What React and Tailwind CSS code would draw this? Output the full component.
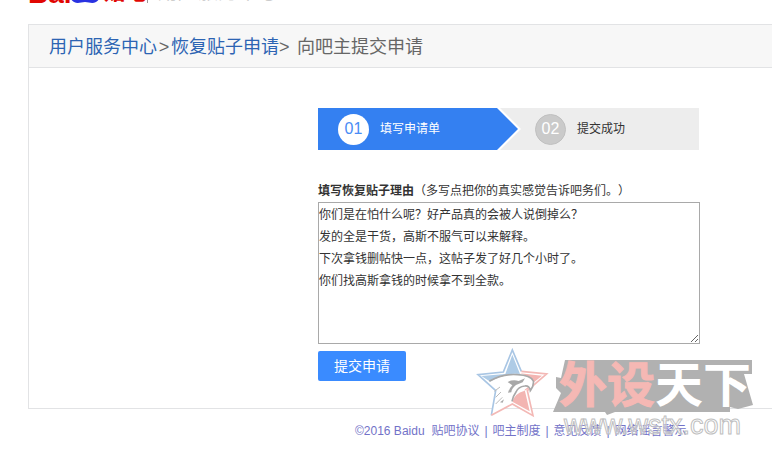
function Paw() {
  return (
    <svg viewBox="0 0 30 30" className="h-[30px] w-[30px]" fill="#2932e1" aria-hidden="true">
      <ellipse cx="4" cy="12" rx="3" ry="4" />
      <ellipse cx="10" cy="5" rx="3" ry="4" />
      <ellipse cx="19" cy="5" rx="3" ry="4" />
      <ellipse cx="26" cy="12" rx="3" ry="4" />
      <path d="M15 10c-6 0-8 5-12 9-3 4-3 8 1 10 4 2 7 0 11 0s7 2 11 0c4-2 4-6 1-10-4-4-6-9-12-9z" />
    </svg>
  );
}

function Header() {
  return (
    <header className="flex h-6 items-start overflow-hidden pl-[28px]">
      <div className="-mt-[27px] flex h-[30px] shrink-0 items-end whitespace-nowrap">
        <span className="w-[42px] text-[28px] leading-[18px] font-bold text-[#e10602]">Bai</span>
        <Paw />
        <span className="ml-[4px] text-[21px] leading-[22px] font-black text-[#e10602]">贴吧</span>
        <span className="mr-[10px] ml-px h-[29px] w-px bg-[#999]" />
        <span className="text-[20px] leading-[22px] text-[#aaa]">用户服务中心</span>
      </div>
    </header>
  );
}

function Step({ number, label, active }) {
  return (
    <li className="flex items-center gap-[11px]">
      <span
        className={
          active
            ? "flex size-[31px] items-center justify-center rounded-full bg-white text-base text-[#4a8cf5]"
            : "flex size-[31px] items-center justify-center rounded-full border border-[#c0c0c0] bg-[#cacaca] text-base text-white"
        }
      >
        {number}
      </span>
      <span className={active ? "text-white" : "text-[#333]"}>{label}</span>
    </li>
  );
}

function Steps() {
  return (
    <ol className="flex h-[42px] w-[381px] bg-[#ededed]">
      <div className="flex w-[179px] bg-[#3480f1] pl-5">
        <Step number="01" label="填写申请单" active />
      </div>
      <svg viewBox="0 0 24 42" className="h-[42px] w-6" aria-hidden="true">
        <path d="M0 0h3l21 21L3 42H0z" fill="#fff" />
        <path d="M0 0l21 21L0 42z" fill="#3480f1" />
      </svg>
      <div className="flex pl-[14px]">
        <Step number="02" label="提交成功" />
      </div>
    </ol>
  );
}

function Star() {
  return (
    <svg viewBox="45 48 225 219" className="h-[73px] w-[75px]" aria-hidden="true">
      <path d="M157 60L184 124L260 132L202 182L219 257L157 222L95 257L108 182L54 134L130 126z" fill="#fff" />
      <path d="M94 256L107 182L54 134L130 126L157 60L184 124" fill="none" stroke="#a9c6e4" strokeWidth="5" />
      <path d="M184 124L260 132L202 182L219 257L157 222L94 256" fill="none" stroke="#f3b8b5" strokeWidth="5" />
      <path d="M157 74L180 132Q148 128 128 140L91 155L64 138L136 132z" fill="#aecbe6" />
      <path d="M180 130L246 137L194 179L209 244L157 215Q165 190 192 183Q218 173 219 150Q208 138 180 130z" fill="#f3b5b2" />
      <path
        d="M90 155Q123 134 166 135Q210 138 219 152Q222 168 209 182Q209 169 194 168Q177 170 169 185Q158 198 157 215L101 245L114 184z"
        fill="#fff"
      />
      <path
        d="M88 154Q128 130 173 134Q212 136 220 153Q222 168 211 182Q209 166 194 168Q175 170 168 186Q158 200 156 214"
        fill="none"
        stroke="#a8a8a8"
        strokeWidth="5"
      />
      <path d="M143 156Q158 148 176 153L195 145L188 157L168 165Q155 175 154 187L144 188Q148 174 157 166z" fill="#a8a8a8" />
      <path d="M103 184l17-13M107 202l16-16M107 222l20-20" fill="none" stroke="#bbb" strokeWidth="3" />
      <path d="M120 217l12-9-4 10z" fill="#a8a8a8" />
    </svg>
  );
}

function Watermark() {
  return (
    <div className="pointer-events-none absolute top-[346px] left-[475px] flex select-none" aria-hidden="true">
      <Star />
      <div className="relative h-[96px] w-[210px]">
        <svg viewBox="0 0 210 96" className="absolute inset-0 h-full w-full">
          <path
            d="M15 14H202V28H194L203 59L188 63L180 61V66H65L57 69L55 66H3L11 47L6 42V31L11 32z"
            fill="#b1b1b1"
          />
        </svg>
        <div className="absolute top-[16px] left-[9px] flex text-[48px] leading-[48px] font-bold whitespace-nowrap">
          <span className="text-[#f5b8b4] [-webkit-text-stroke:1px_#f5b8b4]">外设</span>
          <span className="text-white">天下</span>
        </div>
        <div className="absolute top-[64px] left-[14px] text-[27px] leading-[30px] whitespace-nowrap text-white/40 [-webkit-text-stroke:1px_#c0c0c0]">
          www.wstx.com
        </div>
      </div>
    </div>
  );
}

const message = `你们是在怕什么呢？好产品真的会被人说倒掉么？
发的全是干货，高斯不服气可以来解释。
下次拿钱删帖快一点，这帖子发了好几个小时了。
你们找高斯拿钱的时候拿不到全款。`;

const footerLinks = ["贴吧协议", "吧主制度", "意见反馈", "网络谣言警示"];

export default function App() {
  return (
    <div className="relative min-h-screen overflow-hidden bg-white font-['Liberation_Sans','Noto_Sans_CJK_SC',sans-serif] text-xs text-[#333] [text-spacing-trim:space-all]">
      <Header />
      <main className="ml-[28px] border-y border-l border-[#e2e3e5]">
        <nav className="flex h-[43px] items-center border-b border-[#e2e3e5] bg-[#f7f7f7] pt-[2px] pl-5 text-lg whitespace-nowrap text-[#666]">
          <a href="#service" className="text-[#2d64b3]">用户服务中心</a>
          <span className="w-[14px] text-center">&gt;</span>
          <a href="#restore" className="text-[#2d64b3]">恢复贴子申请</a>
          <span className="w-[18px]">&gt;</span>
          <span>向吧主提交申请</span>
        </nav>
        <form className="pt-10 pb-[27px] pl-[289px]" onSubmit={(e) => e.preventDefault()}>
          <Steps />
          <label htmlFor="reason" className="block pt-[31px] leading-[21px]">
            <strong>填写恢复贴子理由</strong>（多写点把你的真实感觉告诉吧务们。）
          </label>
          <textarea
            id="reason"
            defaultValue={message}
            className="block h-[142px] w-[382px] resize border border-[#a9a9a9] bg-white pt-px leading-[22px] outline-none"
          />
          <button type="submit" className="mt-[7px] block h-[30px] w-[88px] rounded-xs bg-[#3a8bff] text-sm text-white">
            提交申请
          </button>
        </form>
      </main>
      <footer className="flex items-center pt-[12px] pl-[355px] leading-[20px] whitespace-nowrap text-[#7272c8]">
        <span className="mr-[7px]">©2016 Baidu</span>
        {footerLinks.map((link, i) => (
          <span key={link} className="flex">
            {i > 0 && <span className="w-[13px] text-center">|</span>}
            <a href="#footer">{link}</a>
          </span>
        ))}
      </footer>
      <Watermark />
    </div>
  );
}
